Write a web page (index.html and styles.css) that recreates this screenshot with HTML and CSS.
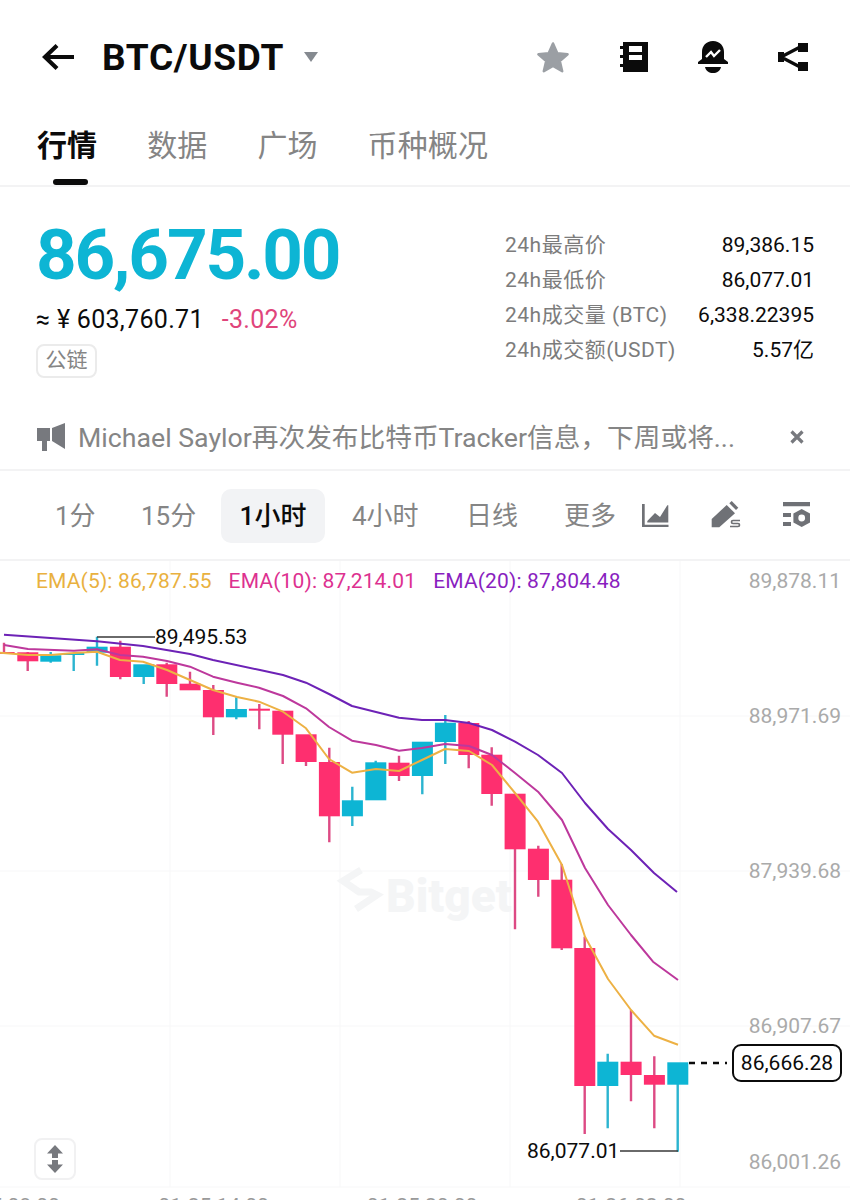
FILE: index.html
```html
<!DOCTYPE html>
<html lang="zh">
<head>
<meta charset="utf-8">
<title>BTC/USDT</title>
<link rel="stylesheet" href="styles.css">
</head>
<body>
<div class="page">
  <header class="topbar">
    <div class="title-group">
      <svg class="ic-back" width="32" height="28" viewBox="0 0 32 28"><path d="M32 14H5M15 2.500 3 14l12 11.500" fill="none" stroke="#0b0b0b" stroke-width="4.200"/></svg>
      <span class="pair">BTC/USDT</span>
      <svg class="ic-caret" width="14" height="10" viewBox="0 0 14 10"><path d="M0 0h14L7 10z" fill="#858a90"/></svg>
    </div>
    <div class="top-icons">
      <svg width="34" height="32" viewBox="0 0 34 32"><path d="M17 2.500l4.300 9.700 10.300 1-7.800 6.800 2.400 10.200L17 25l-9.200 5.200 2.400-10.200-7.800-6.800 10.300-1z" fill="#9b9fa4" stroke="#9b9fa4" stroke-width="2.500" stroke-linejoin="round"/></svg>
      <svg width="28" height="30" viewBox="0 0 28 30"><path d="M3 0h25v30H3z" fill="#0b0b0b"/><path d="M0 4h5v3H0zM0 13h5v3H0zM0 22h5v3H0z" fill="#0b0b0b"/><path d="M9 4h13v6H9zM9 13h13v5H9z" fill="#fff"/></svg>
      <svg width="30" height="32" viewBox="0 0 30 32"><path d="M15 0c7 0 11 5 11 11v7l4 3v2H0v-2l4-3v-7C4 5 8 0 15 0z" fill="#0b0b0b"/><path d="M7 26h16c-1 4-4 6-8 6s-7-2-8-6z" fill="#0b0b0b"/><path d="M8 16l5-5 3 4 6-6" fill="none" stroke="#fff" stroke-width="2.400"/></svg>
      <svg width="30" height="28" viewBox="0 0 30 28"><path d="M3 14L24 3M3 14l21 11" stroke="#0b0b0b" stroke-width="3.200" fill="none"/><path d="M0 9h6v10H0zM20 0h10v9H20zM20 19h10v9H20z" fill="#0b0b0b"/></svg>
    </div>
  </header>

  <nav class="tabs">
    <span class="tab tab-active">行情</span>
    <span class="tab">数据</span>
    <span class="tab">广场</span>
    <span class="tab">币种概况</span>
  </nav>

  <section class="stats">
    <div class="price-col">
      <div class="price">86,675.00</div>
      <div class="sub-row"><span class="cny">≈ ¥ 603,760.71</span><span class="chg">-3.02%</span></div>
      <span class="tag">公链</span>
    </div>
    <dl class="table">
      <div class="trow"><dt>24h最高价</dt><dd>89,386.15</dd></div>
      <div class="trow"><dt>24h最低价</dt><dd>86,077.01</dd></div>
      <div class="trow"><dt>24h成交量 (BTC)</dt><dd>6,338.22395</dd></div>
      <div class="trow"><dt>24h成交额(USDT)</dt><dd>5.57亿</dd></div>
    </dl>
  </section>

  <section class="notice">
    <svg class="ic-horn" width="28" height="28" viewBox="0 0 28 28"><path d="M0 5h13v13h-3v10H5V18H0zM15 5l13-5v26l-13-8z" fill="#77797e"/></svg>
    <span class="notice-text">Michael Saylor再次发布比特币Tracker信息，下周或将...</span>
    <svg class="ic-close" width="14" height="14" viewBox="0 0 14 14"><path d="M1.500 1.500l11 11M12.500 1.500l-11 11" stroke="#77797e" stroke-width="3.200"/></svg>
  </section>

  <section class="intervals">
    <span class="iv iv-1">1分</span>
    <span class="iv iv-2">15分</span>
    <span class="iv iv-3 iv-active">1小时</span>
    <span class="iv iv-4">4小时</span>
    <span class="iv iv-5">日线</span>
    <span class="iv iv-6">更多</span>
    <svg class="tool tool-1" width="27" height="24" viewBox="0 0 27 24"><path d="M0 0h2.700v20.700H26.500V23H0z" fill="#6f7176"/><path d="M5.300 17L13 9l5 4 7.300-11.700h1V18.500h-21z" fill="#6f7176"/></svg>
    <svg class="tool tool-2" width="30" height="27" viewBox="0 0 30 27"><path d="M.7 26.300V18L15.700 4 24 12.300 8.300 26.300z" fill="#6f7176"/><path d="M20.700 0l6.600 6.700L25 9l-6.700-6.700z" fill="#6f7176"/><path d="M29 19.500h-7a1.500 1.500 0 0 0 0 3h5a1.500 1.500 0 0 1 0 3h-8" fill="none" stroke="#6f7176" stroke-width="1.700"/></svg>
    <svg class="tool tool-3" width="28" height="26" viewBox="0 0 28 26"><path d="M0 0h27v4.200H0zM0 11h8v4H0zM0 20h8v4H0z" fill="#6f7176"/><path d="M18.700 7L27 11.500v9L18.700 25l-8.300-4.500v-9z" fill="#6f7176"/><circle cx="18.700" cy="16" r="3.400" fill="#fff"/></svg>
  </section>

  <section class="chart">
    <svg class="plot" width="850" height="639" viewBox="0 561 850 639">
      <g class="grid">
        <path d="M0 716H850M0 871H850M0 1026H850M0 1187H850M170 561V1187M340 561V1187M510 561V1187M680 561V1187"/>
      </g>
      <g class="wicks-red">
        <path d="M4 642.700V653M27.700 652V671M120.300 640.700V679.300M166.700 662.700V696.700M190 671.700V690M213.300 685V735M259.300 704V729.300M282.700 711V764M306 735V766M329.300 747.700V842.300M399 755.700V781M468.700 721V768.300M491.700 747.300V805.700M515 794V929.300M538.300 845.700V896.700M561.700 864V950M584.700 936.700V1134M631 1010V1101.300M654.300 1056.300V1128.300"/>
      </g>
      <g class="wicks-teal">
        <path d="M50.700 652V662.700M73.700 653V671M97 636.700V665.700M143.700 665V684M236.300 697.300V719.300M352.300 786.700V826M375.700 760.700V763M422.300 742V794.300M445.300 715V764M607.700 1053.700V1128.300M677.700 1063V1151.700"/>
      </g>
      <g class="body-red">
        <rect x="-6.400" y="652" width="21" height="2"/><rect x="17.300" y="652.300" width="21" height="9"/><rect x="109.900" y="646.700" width="21" height="30.300"/><rect x="156.300" y="664.300" width="21" height="19.700"/><rect x="179.600" y="683.700" width="21" height="6.600"/><rect x="202.900" y="690" width="21" height="27.300"/><rect x="248.900" y="708.700" width="21" height="2"/><rect x="272.300" y="710.700" width="21" height="24"/><rect x="295.600" y="734.300" width="21" height="27.700"/><rect x="318.900" y="762" width="21" height="54.300"/><rect x="388.600" y="762.700" width="21" height="13.300"/><rect x="458.300" y="723" width="21" height="32"/><rect x="481.300" y="754.700" width="21" height="39.300"/><rect x="504.600" y="793.700" width="21" height="55.600"/><rect x="527.900" y="848.700" width="21" height="31.300"/><rect x="551.300" y="879.700" width="21" height="68.600"/><rect x="574.300" y="948" width="21" height="138"/><rect x="620.600" y="1061.700" width="21" height="13.300"/><rect x="643.900" y="1075" width="21" height="9.700"/>
      </g>
      <g class="body-teal">
        <rect x="40.300" y="655.300" width="21" height="6.400"/><rect x="63.300" y="653" width="21" height="2"/><rect x="86.600" y="646.700" width="21" height="6"/><rect x="133.300" y="664.300" width="21" height="12.700"/><rect x="225.900" y="709" width="21" height="8.300"/><rect x="341.900" y="800.300" width="21" height="16"/><rect x="365.300" y="762.300" width="21" height="38"/><rect x="411.900" y="741.700" width="21" height="34.300"/><rect x="434.900" y="722.700" width="21" height="19.300"/><rect x="597.300" y="1061.700" width="21" height="24.300"/><rect x="667.300" y="1062.300" width="21" height="22.400"/>
      </g>
      <path class="ema20" d="M4 634.700L97 641.300L143 646L190 654L213 660L260 670L283 675L306 682.700L329 694L352 706L399 717.700L422 720L445 720L469 723L492 730L515 741.700L538 755L562 773L585 803L608 829L631 850L654 873L677 892"/>
      <path class="ema10" d="M4 645L28 649L74 650.700L97 649.300L120 655L143 656.700L167 661L190 666.700L213 676.700L237 682.700L259 687.700L283 696L306 708.300L329 727L352 740.700L376 745L399 750.700L422 748L445 744L469 746L492 755L515 773L538 791.700L562 820L585 868L608 905L631 935L653 961.700L678 980"/>
      <path class="ema5" d="M0 652.700L28 655L51 655L74 653L97 651.700L120 660L143 661.700L167 670L190 680L213 690L237 697L259 701.700L283 711.700L306 728.300L329 759L352 772.700L376 769L399 771L422 760L445 749L469 751L492 765L515 793L538 821.700L562 865L585 936.700L608 979L631 1010L654 1035.700L678 1044.700"/>
      <path class="leader" d="M97 637H155M620 1151H678"/>
      <path class="dash" d="M689 1063H727"/>
      <path class="mark-logo" d="M361 870L343 881L359 892H371L377 895L356 909"/>
    </svg>

    <div class="ema-row">
      <span class="ema-a">EMA(5): 86,787.55</span>
      <span class="ema-b">EMA(10): 87,214.01</span>
      <span class="ema-c">EMA(20): 87,804.48</span>
    </div>

    <span class="watermark">Bitget</span>

    <span class="axis axis-1">89,878.11</span>
    <span class="axis axis-2">88,971.69</span>
    <span class="axis axis-3">87,939.68</span>
    <span class="axis axis-4">86,907.67</span>
    <span class="axis axis-5">86,001.26</span>

    <span class="peak peak-hi">89,495.53</span>
    <span class="peak peak-lo">86,077.01</span>
    <span class="last">86,666.28</span>

    <button class="scale-btn" type="button" aria-label="scale">
      <svg width="16" height="28" viewBox="0 0 16 28"><path d="M8 0l8 8.500h-5V13H5V8.500H0zM5 15h6v4.500h5L8 28l-8-8.500h5z" fill="#77797e"/></svg>
    </button>

    <span class="time time-1">01-25 08:00</span>
    <span class="time time-2">01-25 14:00</span>
    <span class="time time-3">01-25 20:00</span>
    <span class="time time-4">01-26 02:00</span>
  </section>
</div>
</body>
</html>
```
FILE: styles.css
```css
* { box-sizing: border-box; margin: 0; padding: 0; }
html, body { width: 850px; height: 1200px; overflow: hidden; background: #fff; }
body { font-family: Roboto, "Noto Sans CJK SC", sans-serif; color: #0b0b0b; }
.page { width: 850px; height: 1200px; overflow: hidden; display: flex; flex-direction: column; }

.topbar { height: 112px; padding: 2px 42px 0; display: flex; align-items: center; justify-content: space-between; }
.title-group { display: flex; align-items: center; }
.ic-back { margin-right: 28px; }
.pair { font-size: 37px; font-weight: 700; letter-spacing: .7px; line-height: 1; }
.ic-caret { margin-left: 20px; }
.top-icons { display: flex; align-items: center; gap: 50px; }

.tabs { height: 75px; padding-left: 37px; display: flex; gap: 50px; border-bottom: 2px solid #f3f3f4; position: relative; }
.tab { font-size: 30px; line-height: 36px; padding-top: 16px; color: #858585; position: relative; letter-spacing: .1px; }
.tab-active { color: #0b0b0b; font-weight: 700; }
.tab-active::after { content: ""; position: absolute; left: 16px; width: 35px; top: 67px; height: 6px; border-radius: 3px; background: #0b0b0b; }

.stats { height: 204px; padding: 0 36px; display: flex; justify-content: space-between; }
.price-col { padding-top: 26px; }
.price { font-size: 71px; font-weight: 700; color: #0db5d4; line-height: 84px; letter-spacing: -2.200px; }
.sub-row { margin-top: 7px; display: flex; gap: 18px; font-size: 25px; line-height: 32px; letter-spacing: .3px; }
.chg { color: #e0457b; }
.tag { display: inline-block; margin-top: 8px; padding: 0 7.500px; height: 34px; line-height: 29px; font-size: 21px; color: #858585; border: 2px solid #ebebeb; border-radius: 8px; }
.table { width: 309px; padding-top: 41px; }
.trow { display: flex; justify-content: space-between; height: 35px; font-size: 21px; line-height: 35px; }
.trow dt { color: #7c7c7c; letter-spacing: .5px; }
.trow dd { color: #0b0b0b; }

.notice { height: 80px; padding: 14px 36px 0; display: flex; align-items: center; border-bottom: 2px solid #f3f3f4; }
.ic-horn { flex: none; margin-left: 1px; margin-right: 13px; }
.notice-text { font-size: 26.700px; color: #858585; white-space: nowrap; flex: 1; padding-bottom: 4px; }
.ic-close { flex: none; margin-right: 10px; }

.intervals { height: 90px; position: relative; border-bottom: 2px solid #f3f3f4; }
.iv { position: absolute; top: 18px; height: 54px; line-height: 55px; font-size: 26px; color: #858585; white-space: nowrap; }
.iv-1 { left: 55px; }
.iv-2 { left: 141px; }
.iv-3 { left: 221px; width: 104px; text-align: center; background: #f2f3f5; border-radius: 10px; color: #0b0b0b; font-weight: 500; }
.iv-4 { left: 352px; }
.iv-5 { left: 466px; }
.iv-6 { left: 564px; }
.tool { position: absolute; }
.tool-1 { left: 642px; top: 33px; }
.tool-2 { left: 711px; top: 30px; }
.tool-3 { left: 783px; top: 31px; }

.chart { flex: 1; position: relative; overflow: hidden; }
.plot { position: absolute; left: 0; top: 0; display: block; }
.grid path { stroke: #f7f7f8; stroke-width: 1; fill: none; }
.wicks-red path { stroke: #dd4a84; stroke-width: 2.400; fill: none; }
.wicks-teal path { stroke: #2bb4d0; stroke-width: 2.400; fill: none; }
.body-red rect { fill: #fe2f6f; }
.body-teal rect { fill: #0db5d4; }
.ema20, .ema10, .ema5 { fill: none; stroke-width: 2; stroke-linejoin: round; }
.ema20 { stroke: #6d22b6; }
.ema10 { stroke: #bd389c; }
.ema5 { stroke: #edb144; }
.leader { fill: none; stroke: #3a3a3a; stroke-width: 1.300; }
.dash { fill: none; stroke: #0b0b0b; stroke-width: 2.400; stroke-dasharray: 6 6; }
.mark-logo { fill: none; stroke: #f4f5f6; stroke-width: 7; }

.ema-row { position: absolute; left: 36px; top: 6px; font-size: 21px; line-height: 28px; display: flex; gap: 17px; white-space: nowrap; letter-spacing: .15px; }
.ema-a { color: #e9b13f; }
.ema-b { color: #dd3190; }
.ema-c { color: #8a1fc0; }

.watermark { position: absolute; left: 386px; top: 309px; font-size: 46px; line-height: 52px; font-weight: 900; color: #f4f5f6; }

.axis { position: absolute; right: 9px; font-size: 21px; line-height: 28px; color: #aaaaaa; }
.axis-1 { top: 6px; }
.axis-2 { top: 141px; }
.axis-3 { top: 296px; }
.axis-4 { top: 451px; }
.axis-5 { top: 587px; }

.peak { position: absolute; font-size: 21px; line-height: 28px; color: #0b0b0b; }
.peak-hi { left: 155px; top: 62px; }
.peak-lo { left: 527px; top: 576px; }
.last { position: absolute; left: 732px; top: 483px; width: 110px; height: 38px; border: 2px solid #0b0b0b; border-radius: 9px; background: #fff; font-size: 21px; line-height: 34px; text-align: center; color: #0b0b0b; }

.scale-btn { position: absolute; left: 34px; top: 577px; width: 42px; height: 42px; border: 2px solid #f1f1f2; border-radius: 8px; background: #fff; display: flex; align-items: center; justify-content: center; }

.time { position: absolute; top: 632px; width: 120px; text-align: center; font-size: 21px; line-height: 26px; color: #9a9a9a; white-space: nowrap; }
.time-1 { left: -55.500px; }
.time-2 { left: 153.500px; }
.time-3 { left: 362px; }
.time-4 { left: 571px; }
```
